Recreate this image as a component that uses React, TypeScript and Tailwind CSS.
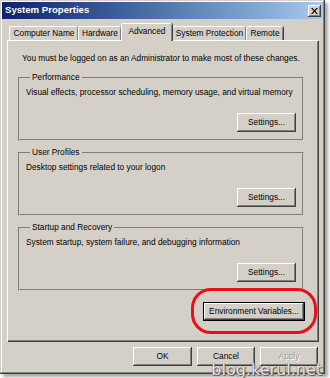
import React from 'react';

const font = { fontFamily: '"Liberation Sans", Arial, sans-serif' };

const Btn = ({
  label,
  width,
  isDefault,
  disabled,
}: {
  label: string;
  width: string;
  isDefault?: boolean;
  disabled?: boolean;
}) => (
  <button
    className={`${width} flex h-[19px] items-center justify-center whitespace-nowrap bg-[#d4d0c8] text-[8.3px] leading-none ${
      isDefault
        ? 'border border-black shadow-[inset_-1px_-1px_#404040,inset_1px_1px_#fff,inset_-2px_-2px_#808080]'
        : 'shadow-[inset_-1px_-1px_#404040,inset_1px_1px_#fff,inset_-2px_-2px_#808080]'
    } ${disabled ? 'text-[#a09c94] [text-shadow:1px_1px_#fff]' : 'text-black'}`}
  >
    {label}
  </button>
);

const Group = ({ title, text }: { title: string; text: string }) => (
  <fieldset className="flex flex-col border-2 border-[#d4d0c8] px-[6px] pb-[7px] [border-style:groove]">
    <legend className="ml-[4px] px-[2px] text-[8.3px] leading-[11px]">{title}</legend>
    <p className="mt-[4px] whitespace-nowrap text-[8.3px] leading-[11px]">{text}</p>
    <div className="mt-[15px] flex justify-end">
      <Btn label="Settings..." width="w-[59px]" />
    </div>
  </fieldset>
);

const tabs = [
  { label: 'Computer Name', w: 'w-[69px]' },
  { label: 'Hardware', w: 'w-[43px]' },
  { label: 'Advanced', w: 'w-[51px]', active: true },
  { label: 'System Protection', w: 'w-[74px]' },
  { label: 'Remote', w: 'w-[37px]' },
];

const App = () => {
  return (
    <div className="h-[378px] w-[330px] bg-white text-black" style={font}>
      <div className="relative flex h-[374px] w-[325px] flex-col bg-[#d4d0c8] p-[2px] shadow-[inset_-1px_-1px_#404040,inset_1px_1px_#d4d0c8,inset_-2px_-2px_#808080,inset_2px_2px_#fff,3px_3px_3px_rgba(0,0,0,0.35)]">
        {/* title bar */}
        <div className="flex h-[17px] items-center justify-between bg-gradient-to-r from-[#0a246a] to-[#a6caf0] pl-[3px] pr-[2px]">
          <span className="text-[9.6px] font-bold text-white">System Properties</span>
          <button className="flex h-[12px] w-[13px] items-center justify-center bg-[#d4d0c8] shadow-[inset_-1px_-1px_#404040,inset_1px_1px_#fff,inset_-2px_-2px_#808080]">
            <svg width="7" height="6" viewBox="0 0 7 6">
              <path d="M0 0h1.5l2 2.2 2-2.2H7L4.3 3 7 6H5.5l-2-2.2-2 2.2H0l2.7-3z" fill="#000" />
            </svg>
          </button>
        </div>

        {/* tabs */}
        <div className="flex h-[21px] items-end pl-[7px]">
          {tabs.map((t) => (
            <div
              key={t.label}
              className={`${t.w} relative flex items-center justify-center whitespace-nowrap rounded-t-[2px] border-l border-t border-l-white border-t-white text-[8.3px] leading-none shadow-[inset_-1px_0_#808080,1px_0_#404040] ${
                t.active ? 'z-10 -mb-px h-[18px] bg-[#d4d0c8] pb-[3px]' : 'h-[14px]'
              }`}
            >
              {t.label}
            </div>
          ))}
        </div>

        {/* panel */}
        <div className="relative mx-[5px] flex h-[301px] flex-col border-l border-t border-l-white border-t-white shadow-[inset_-1px_-1px_#808080,1px_1px_#404040]">
          <p className="ml-[14px] mt-[12px] whitespace-nowrap text-[8.3px] leading-[11px]">
            You must be logged on as an Administrator to make most of these changes.
          </p>
          <div className="ml-[10px] mr-[14px] mt-[8px] flex flex-col gap-[6px]">
            <Group title="Performance" text="Visual effects, processor scheduling, memory usage, and virtual memory" />
            <Group title="User Profiles" text="Desktop settings related to your logon" />
            <Group title="Startup and Recovery" text="System startup, system failure, and debugging information" />
          </div>
          <div className="mr-[13px] mt-[11px] flex justify-end">
            <Btn label="Environment Variables..." width="w-[102px]" isDefault />
          </div>
          {/* annotation */}
          <div className="absolute left-[183px] top-[247px] h-[46px] w-[126px] rounded-[20px] border-[3px] border-[#e8101a]" />
        </div>

        {/* dialog buttons */}
        <div className="mt-[6px] flex justify-end gap-[5px] pr-[5px]">
          <Btn label="OK" width="w-[59px]" />
          <Btn label="Cancel" width="w-[58px]" />
          <Btn label="Apply" width="w-[58px]" disabled />
        </div>

        <span
          className="absolute bottom-[-4px] right-[3px] text-[16px] leading-none text-[#e8e8e8] [text-shadow:0_0_1px_#444,1px_1px_1px_#555]"
          style={{ fontFamily: '"DejaVu Sans", Verdana, sans-serif' }}
        >
          blog.kerul.net
        </span>
      </div>
    </div>
  );
};

export default App;
